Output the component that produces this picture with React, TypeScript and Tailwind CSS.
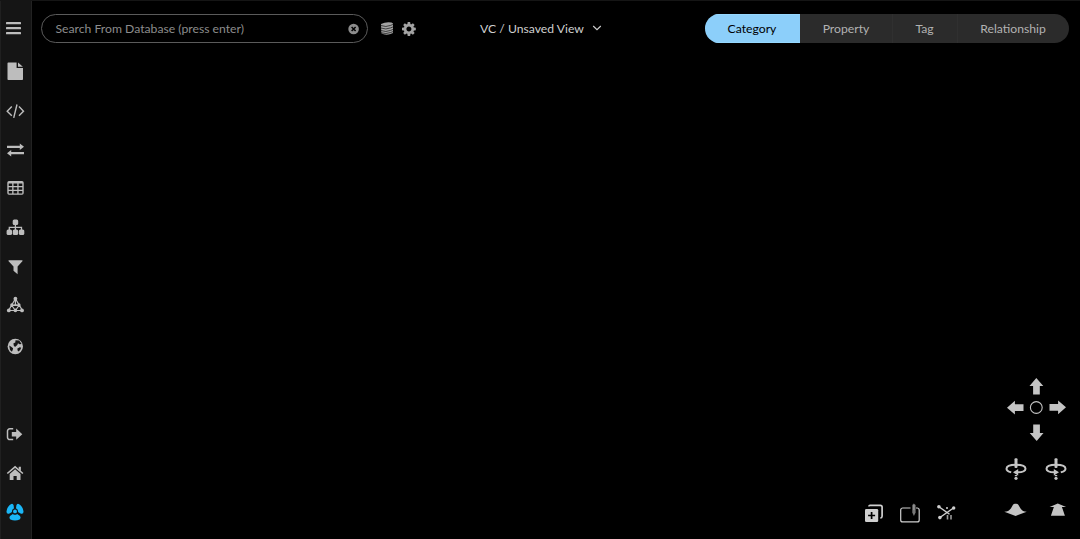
import React from "react";

type IconProps = { className?: string; size?: number; children: React.ReactNode };

function Icon({ className = "", size = 20, children }: IconProps) {
  return (
    <svg
      width={size}
      height={size}
      viewBox={`0 0 ${size} ${size}`}
      fill="currentColor"
      className={`block shrink-0 ${className}`}
      aria-hidden="true"
    >
      {children}
    </svg>
  );
}

const sideItems: { name: string; gap: string; color?: string; art: React.ReactNode }[] = [
  {
    name: "menu",
    gap: "mt-[18px]",
    art: (
      <>
        <rect x="1" y="4" width="15" height="2.3" rx=".5" />
        <rect x="1" y="9" width="15" height="2.3" rx=".5" />
        <rect x="1" y="14" width="15" height="2.3" rx=".5" />
      </>
    ),
  },
  {
    name: "file",
    gap: "mt-[23px]",
    art: (
      <>
        <path d="M3.3 1.5H11.6V7H18V18.2a.8.8 0 0 1-.8.8H3.3a.8.8 0 0 1-.8-.8V2.3a.8.8 0 0 1 .8-.8Z" />
        <path d="M13 1.6 17.9 5.8H13Z" />
      </>
    ),
  },
  {
    name: "code",
    gap: "mt-5",
    art: (
      <path
        d="M6.8 5.5 2.2 10.2 6.8 14.8M14 5.5 18.5 10.2 14 14.8M12 3.5 8.7 16.8"
        fill="none"
        stroke="currentColor"
        strokeWidth="1.4"
      />
    ),
  },
  {
    name: "exchange",
    gap: "mt-[19px]",
    art: (
      <>
        <path d="M2 5.7H14.8V3.6L19 6.8 14.8 10V7.9H2Z" />
        <path d="M19 12.1H6.2V10L2 13.2 6.2 16.4V14.3H19Z" />
      </>
    ),
  },
  {
    name: "table",
    gap: "mt-[18px]",
    art: (
      <path
        fillRule="evenodd"
        d="M4 3H17a1.7 1.7 0 0 1 1.7 1.7V15a1.7 1.7 0 0 1-1.7 1.7H4A1.7 1.7 0 0 1 2.3 15V4.7A1.7 1.7 0 0 1 4 3ZM3.7 5.5V8H7.2V5.5ZM8.5 5.5V8H12.3V5.5ZM13.6 5.5V8H17.3V5.5ZM3.7 9.2V11.7H7.2V9.2ZM8.5 9.2V11.7H12.3V9.2ZM13.6 9.2V11.7H17.3V9.2ZM3.7 12.9V15.4H7.2V12.9ZM8.5 12.9V15.4H12.3V12.9ZM13.6 12.9V15.4H17.3V12.9Z"
      />
    ),
  },
  {
    name: "hierarchy",
    gap: "mt-[19px]",
    art: (
      <>
        <rect x="7.7" y="2.5" width="5.5" height="5.5" rx="1.5" />
        <rect x="1.6" y="12.5" width="5.4" height="5.5" rx="1.5" />
        <rect x="7.75" y="12.5" width="5.4" height="5.5" rx="1.5" />
        <rect x="13.9" y="12.5" width="5.4" height="5.5" rx="1.5" />
        <path d="M10.4 7V13M4.3 13V10.3H16.5V13" fill="none" stroke="currentColor" strokeWidth="1.3" />
      </>
    ),
  },
  {
    name: "filter",
    gap: "mt-5",
    art: <path d="M3.8 3.2H17.2q.7.4.2 1.1L12.6 9.5V17.2L8.5 13.7V9.5L3.6 4.3q-.5-.7.2-1.1Z" />,
  },
  {
    name: "network",
    gap: "mt-[18px]",
    art: (
      <>
        <path
          d="M10.4 3.7 3.6 15.5H17.4ZM10.4 3.7V9.5L6.8 10.5M10.4 9.5 14 10.5M6.8 10.5 10.4 15.5 14 10.5M6.8 10.5H14"
          fill="none"
          stroke="currentColor"
          strokeWidth="1.2"
        />
        <circle cx="10.4" cy="3.7" r="1.9" />
        <circle cx="6.8" cy="9.9" r="1.6" />
        <circle cx="14" cy="9.9" r="1.6" />
        <circle cx="3.8" cy="15.4" r="1.9" />
        <circle cx="10.4" cy="15.4" r="1.8" />
        <circle cx="17" cy="15.4" r="1.9" />
      </>
    ),
  },
  {
    name: "globe",
    gap: "mt-[21px]",
    art: (
      <>
        <circle cx="10.3" cy="10.5" r="7.7" />
        <path
          d="M10.5 4.2 14.2 4.6 16.6 7.9 14.5 8.2 13 7.3 12.3 9 10 10.9 8.7 9.6 8.5 7.3 10.3 6.4ZM4.2 9.6 6.2 10.8 8.1 12.3 7.7 14 6.9 15.7 5 13.9ZM12.4 12.4 14.8 11.2 16.2 11.8 15 14.2 13.1 15.4 12.5 14.1Z"
          fill="#151515"
        />
      </>
    ),
  },
  {
    name: "exit",
    gap: "mt-[68px]",
    art: (
      <>
        <path d="M8.2 4.8H4.8A2.3 2.3 0 0 0 2.5 7.1V13.3A2.3 2.3 0 0 0 4.8 15.6H8.2" fill="none" stroke="currentColor" strokeWidth="1.5" />
        <path d="M6.8 7.9H11.2V4.6L17.3 10.2 11.2 15.8V12.5H6.8Z" />
      </>
    ),
  },
  {
    name: "home",
    gap: "mt-[19px]",
    art: (
      <>
        <path d="M10.1 6.2 15.5 11V17H11.7V13H8.5V17H4.7V11Z" />
        <path d="M2.3 10.5 10.1 3.9 17.9 10.5" fill="none" stroke="currentColor" strokeWidth="1.6" />
        <path d="M13.7 3.7H15.9V8.2L13.7 6.3Z" />
      </>
    ),
  },
  {
    name: "active",
    gap: "mt-[19px]",
    color: "text-[#1ab6f6]",
    art: (
      <>
        <path d="M6.3 1.9Q8 1.2 8.6 3.3L9 6.6A3.1 3.1 0 0 0 7 10.1L4 11.7Q1.4 12.3 1.5 9.5 2.2 4 6.3 1.9Z" />
        <path d="M13.7 1.9Q12 1.2 11.4 3.3L11 6.6A3.1 3.1 0 0 1 13 10.1L16 11.7Q18.6 12.3 18.5 9.5 17.8 4 13.7 1.9Z" />
        <path d="M7.9 11.9A3.2 3.2 0 0 0 12.1 11.9L14.7 13.7Q16.5 15.8 14.6 17.4 10 19.7 5.4 17.4 3.5 15.8 5.3 13.7Z" />
        <circle cx="10" cy="9.4" r="1.9" />
      </>
    ),
  },
];

function Sidebar() {
  return (
    <nav className="flex w-8 shrink-0 flex-col border-r border-l border-r-[#222] border-l-[#202020] bg-[#151515] pl-1">
      {sideItems.map((item) => (
        <button key={item.name} aria-label={item.name} className={`h-5 w-5 shrink-0 ${item.gap} ${item.color ?? "text-[#bdbdbd]"}`}>
          <Icon>{item.art}</Icon>
        </button>
      ))}
    </nav>
  );
}

function Header() {
  return (
    <header className="flex h-[29px] items-center">
      <div className="flex h-[29px] w-[327px] items-center justify-between rounded-full border border-[#5b5b5b] pr-[7px] pl-[14px] text-[#8c8c8c]">
        <span className="pt-[2px] text-[12.2px] leading-none whitespace-nowrap">Search From Database (press enter)</span>
        <Icon size={14}>
          <circle cx="7.6" cy="7" r="5.3" />
          <path d="M5.6 5 9.6 9M9.6 5 5.6 9" stroke="#000" strokeWidth="1.5" />
        </Icon>
      </div>
      <Icon size={16} className="ml-[11px] text-[#a3a3a3]">
        <path d="M2 3Q7 .5 12.500 1.500L14 2.500V12L11.500 13.100Q6 14.800 2.300 12.300Z" />
        <path
          d="M1.800 4.500Q7 6.500 11.600 4.400L14.300 3.300M1.800 7Q7 9 11.600 6.900L14.300 5.800M1.800 9.500Q7 11.500 11.600 9.400L14.300 8.300M1.800 11.700Q7 13.500 11.600 11.500L14.300 10.500"
          stroke="#111"
          strokeWidth=".7"
          fill="none"
        />
      </Icon>
      <Icon size={16} className="ml-[6px] text-[#a3a3a3]">
        <g transform="translate(7.9 8)">
          {[0, 45, 90, 135, 180, 225, 270, 315].map((a) => (
            <path key={a} d="M-1.7-4-1.2-6.9H1.2L1.7-4Z" transform={`rotate(${a})`} />
          ))}
          <circle r="3.8" fill="none" stroke="currentColor" strokeWidth="2.6" />
        </g>
      </Icon>
      <button className="ml-[63.5px] flex items-center text-[12.2px] leading-none whitespace-nowrap text-[#cfcfcf]">
        <span className="w-[104px] pt-[2px] text-left">VC / Unsaved View</span>
        <Icon size={14} className="ml-[5.5px]">
          <path d="M3.2 5 7 8.700 10.800 5" fill="none" stroke="currentColor" strokeWidth="1.1" />
        </Icon>
      </button>
      <div className="ml-auto flex h-[29px] overflow-hidden rounded-full bg-[#2b2b2b] text-[12.2px] leading-none text-[#b2b2b2]">
        <button className="w-[95px] border-y border-[#96d8ff] bg-[#8ccffa] pt-[2px] text-black">Category</button>
        <button className="w-[92px] pt-[2px] pl-px">Property</button>
        <button className="w-[65px] border-l border-[#303030] pt-[2px]">Tag</button>
        <button className="w-[112px] border-l border-[#303030] pt-[2px]">Relationship</button>
      </div>
    </header>
  );
}

function PanArrow({ className = "" }: { className?: string }) {
  return (
    <Icon size={21} className={className}>
      <path d="M10.3 2 17.3 9.9H13.8V18.5H7.1V9.9H3.5Z" />
    </Icon>
  );
}

function Orbit({ mirrored = false }: { mirrored?: boolean }) {
  return (
    <Icon size={24} className={mirrored ? "-scale-x-100" : ""}>
      <path
        d="M7.2 15.3Q2.5 14.3 2.5 11.7C2.5 9.2 6.5 7.7 12 7.7S21.5 9.2 21.5 11.7C21.5 14 18.8 15.2 13.5 15.3"
        fill="none"
        stroke="currentColor"
        strokeWidth="2"
      />
      <rect x="10.5" y="1.2" width="3" height="9.8" rx="1" />
      <path d="M9 15.3 14.2 12.1V18.5Z" />
      <path d="M10.8 18H13.2V19.2H10.8Z" />
      <circle cx="12" cy="21.3" r="1.6" />
    </Icon>
  );
}

function ViewTools() {
  return (
    <div className="mr-[47.5px] flex items-center self-end text-[#cfcfcf]">
      <Icon size={22}>
        <path d="M6 4.5V4.3A1 1 0 0 1 7 3.3H17.3A1.8 1.8 0 0 1 19.1 5.1V14.3A1.8 1.8 0 0 1 17.3 16" fill="none" stroke="currentColor" strokeWidth="1.7" />
        <rect x="2" y="7" width="13.2" height="13" rx="1.3" />
        <path d="M8.6 10V17M5.1 13.5H12.1" stroke="#000" strokeWidth="1.7" />
      </Icon>
      <Icon size={22} className="ml-[14px]">
        <path d="M11.5 6H3.7A2 2 0 0 0 1.7 8V17.9A2 2 0 0 0 3.7 19.9H18.2A2 2 0 0 0 20.2 17.9V8A2 2 0 0 0 18.2 6H17" fill="none" stroke="currentColor" strokeWidth="1.2" />
        <path d="M14.8 1.4 16.6 3V10.5L14.9 14 13.3 10.5V3Z" fill="#777" />
        <path d="M14.9 3V8" stroke="#aaa" strokeWidth=".8" />
      </Icon>
      <Icon size={22} className="ml-[15px]">
        <path d="M2.9 4.7 13.5 12.3M17.5 6 3.9 15.5" fill="none" stroke="currentColor" strokeWidth="1.4" />
        <circle cx="2.9" cy="4.8" r="1.8" />
        <circle cx="17.7" cy="6" r="1.7" />
        <circle cx="3.9" cy="15.6" r="1.8" />
        <circle cx="11" cy="6" r="1" />
        <path d="M11.5 13V17.5M15 13V17.5" stroke="#999" strokeWidth="1.6" />
      </Icon>
    </div>
  );
}

function CameraControls() {
  return (
    <div className="flex w-[74px] flex-col text-[#c4c4c4]">
      <div className="grid w-[63px] grid-cols-3">
        <span />
        <PanArrow />
        <span />
        <PanArrow className="-rotate-90" />
        <Icon size={21}>
          <circle cx="10.3" cy="10.5" r="5.9" fill="none" stroke="currentColor" strokeWidth="1.1" />
        </Icon>
        <PanArrow className="rotate-90" />
        <span />
        <PanArrow className="mt-[4px] rotate-180" />
      </div>
      <div className="mt-[14px] -ml-px flex w-[64px] justify-between">
        <Orbit />
        <Orbit mirrored />
      </div>
      <div className="mt-[18px] -ml-px flex w-[66px] justify-between">
        <Icon size={24}>
          <path d="M.3 12.8Q4.5 12.7 7 9.2L9 5.7Q9.7 4.7 11 4.7H12.3Q13.7 4.7 14.3 5.7L16.4 9.2Q18.5 12.7 22.7 12.8L11.6 16.9Z" />
        </Icon>
        <Icon size={24}>
          <path d="M11.8 4.6 20.1 7.9H15.9L18.9 16.7H4.9L7.9 7.9H3.6Z" />
        </Icon>
      </div>
    </div>
  );
}

export default function App() {
  return (
    <div className="flex h-[539px] w-[1080px] overflow-hidden border-t border-[#151515] bg-black [font-family:Lato,'Liberation_Sans',sans-serif]">
      <div className="-mt-px flex">
        <Sidebar />
      </div>
      <main className="flex min-w-0 flex-1 flex-col justify-between pt-[13px] pr-[11.5px] pl-[8.5px]">
        <Header />
        <div className="mr-[-10.5px] mb-[16px] flex justify-end">
          <div className="-mb-[1px] flex self-end">
            <ViewTools />
          </div>
          <CameraControls />
        </div>
      </main>
    </div>
  );
}
